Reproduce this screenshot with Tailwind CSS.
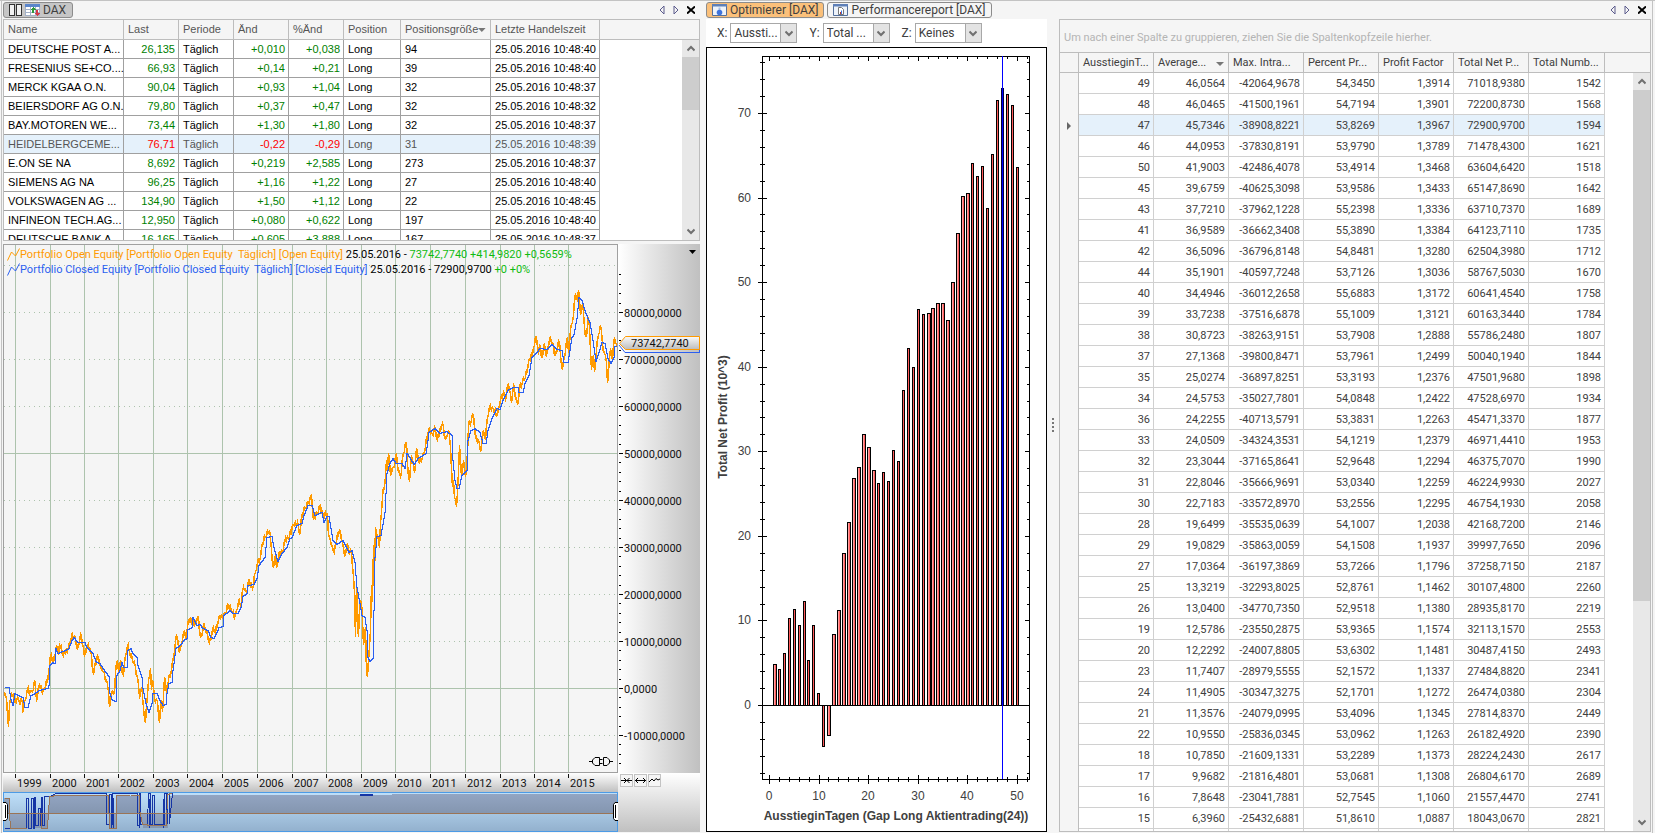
<!DOCTYPE html>
<html lang="de">
  <head>
    <meta charset="UTF-8" />
    <meta name="viewport" content="width=device-width, initial-scale=1" />
    <title>Optimierer [DAX]</title>
    <script src="https://cdn.jsdelivr.net/npm/@tailwindcss/browser@4"></script>
  </head>
  <body
    class="h-screen overflow-hidden bg-[#f5f5f5] font-[Roboto,'Liberation_Sans',sans-serif] text-[11px] text-[#404040]"
  >
    <main
      class="grid h-full grid-cols-[700fr_6px_341fr_12px_592fr_4px] border-t border-[#c3c3c3]"
    >
      <!-- Watchlist and equity chart -->
      <section
        class="ml-px flex min-h-0 min-w-0 flex-col border-l border-[#c3c3c3] pb-px pl-px"
      >
        <div class="flex h-[18px] shrink-0 items-center justify-between">
          <button
            class="flex h-4 items-center gap-[3px] rounded-[3px] border border-[#8c8c8c] bg-[#c6c6c6] pr-1.5 pl-[5px] text-xs"
          >
            <svg width="13" height="12" viewBox="0 0 13 12" fill="#f2f2f2" stroke="#333" shape-rendering="crispEdges">
              <path d="M.5.5h5v11h-5zM7.5.5h5v11h-5z" />
            </svg>
            <svg width="15" height="12" viewBox="0 0 15 12" shape-rendering="crispEdges">
              <path d="M0 0h15v12H0z" fill="#fff" />
              <path d="M.5.5h14v11H.5zM0 5.500h15M0 8.500h15M5.500 3v9M10.500 3v9" fill="none" stroke="#a3b1c8" />
              <path d="M0 0h15v3H0z" fill="#5b86cc" />
              <path d="M8 3l3 3H9v3H7V6H5z" fill="#2f9a3a" />
              <path d="M12 12l-3-3h2V6h2v3h2z" fill="#d23a48" />
            </svg>
            DAX
          </button>
          <div class="flex items-center gap-2 pr-[5px]">
            <button aria-label="Zurück">
              <svg width="6" height="10" viewBox="0 0 6 10" fill="none" stroke="#5b5b8c"><path d="M5 1v8L1 5z" /></svg>
            </button>
            <button aria-label="Vor">
              <svg width="6" height="10" viewBox="0 0 6 10" fill="none" stroke="#5b5b8c"><path d="M1 1v8l4-4z" /></svg>
            </button>
            <button aria-label="Schließen">
              <svg width="8" height="8" viewBox="0 0 8 8" stroke="#000" stroke-width="2"><path d="M0 .5l8 7M8 .5l-8 7" /></svg>
            </button>
          </div>
        </div>

        <div
          class="relative h-[222px] shrink-0 overflow-hidden border border-[#bdbdbd] bg-white font-['Liberation_Sans',sans-serif]"
        >
          <table class="w-full table-fixed border-separate border-spacing-0">
            <thead>
              <tr class="h-5 bg-[#f5f5f5] text-left text-[#555]">
                <th class="w-[120px] border-r border-b border-[#bdbdbd] px-1 font-normal">Name</th>
                <th class="w-[55px] border-r border-b border-[#bdbdbd] px-1 font-normal">Last</th>
                <th class="w-[55px] border-r border-b border-[#bdbdbd] px-1 font-normal">Periode</th>
                <th class="w-[55px] border-r border-b border-[#bdbdbd] px-1 font-normal">Änd</th>
                <th class="w-[55px] border-r border-b border-[#bdbdbd] px-1 font-normal">%Änd</th>
                <th class="w-[57px] border-r border-b border-[#bdbdbd] px-1 font-normal">Position</th>
                <th class="w-[90px] border-r border-b border-[#bdbdbd] px-1 font-normal">
                  <div class="flex items-center justify-between">
                    Positionsgröße
                    <svg width="8" height="4" viewBox="0 0 8 4" fill="#777"><path d="M0 0h8L4 4z" /></svg>
                  </div>
                </th>
                <th class="w-[109px] border-r border-b border-[#bdbdbd] px-1 font-normal">Letzte Handelszeit</th>
                <th class="border-b border-[#bdbdbd]"></th>
              </tr>
            </thead>
            <tbody id="watchlist" class="text-black"></tbody>
          </table>
          <div class="absolute top-5 right-0 bottom-0 flex w-[17px] flex-col bg-[#e8e8e8]">
            <button aria-label="Nach oben" class="grid h-[17px] place-items-center">
              <svg width="8" height="7" viewBox="0 0 8 7" fill="none" stroke="#707070" stroke-width="2"><path d="M.5 5.500L4 2l3.500 3.500" /></svg>
            </button>
            <div class="h-[53px] bg-[#cdcdcd]"></div>
            <button aria-label="Nach unten" class="mt-auto grid h-[17px] place-items-center">
              <svg width="8" height="7" viewBox="0 0 8 7" fill="none" stroke="#707070" stroke-width="2"><path d="M.5 1.500L4 5l3.500-3.500" /></svg>
            </button>
          </div>
        </div>

        <div class="mt-[3px] grid min-h-0 flex-1 grid-cols-[615fr_82fr] grid-rows-[minmax(0,1fr)_19px_40px]">
          <div class="relative border border-[#a0a0a0]">
            <svg class="block h-full w-full" viewBox="4 245 613 527" preserveAspectRatio="none" fill="none" shape-rendering="crispEdges">
              <g id="equityGrid"></g>
              <polyline id="openEquity" stroke="#ff9a00" stroke-width="1.500" />
              <polyline id="closedEquity" stroke="#2b5ff0" />
            </svg>
            <div class="absolute top-0.5 left-[3px] leading-[15px] text-black">
              <p class="flex items-center whitespace-nowrap">
                <svg width="13" height="13" viewBox="0 0 13 13" fill="none" stroke="#ff9a00"><path d="M.5 12.500L4.500 4l4 4 4-7.500" /></svg>
                <span class="whitespace-pre text-[#ff9a00]">Portfolio Open Equity [Portfolio Open Equity  Täglich] [Open Equity] </span>
                <span class="whitespace-pre">25.05.2016 - </span>
                <span class="text-[#0fbb0f]">73742,7740 +414,9820 +0,5659%</span>
              </p>
              <p class="flex items-center whitespace-nowrap">
                <svg width="13" height="13" viewBox="0 0 13 13" fill="none" stroke="#2b5ff0"><path d="M.5 12.500L4.500 4l4 4 4-7.500" /></svg>
                <span class="whitespace-pre text-[#2b5ff0]">Portfolio Closed Equity [Portfolio Closed Equity  Täglich] [Closed Equity] </span>
                <span class="whitespace-pre">25.05.2016 - 72900,9700 </span>
                <span class="text-[#0fbb0f]">+0 +0%</span>
              </p>
            </div>
            <svg class="absolute right-1 bottom-1.5" width="24" height="10" viewBox="0 0 24 10" fill="none" stroke="#000">
              <path d="M0 5.500h3.500M10.500 1.500H6L3.500 4v3L6 9.500h4.500zM10.500 3.500h3M10.500 7.500h3M14.500 1.500H18L20.500 4v3L18 9.500h-3.500zM20.500 5.500H24" />
            </svg>
          </div>

          <div class="relative bg-linear-to-r from-white to-[#c0c0c0]">
            <svg class="block h-full w-full" viewBox="618 244 82 529" preserveAspectRatio="none" shape-rendering="crispEdges">
              <defs>
                <linearGradient id="tag" x2="0" y2="1">
                  <stop stop-color="#fafafa" />
                  <stop offset="1" stop-color="#bcbcbc" />
                </linearGradient>
              </defs>
              <g id="priceAxis" fill="#111" stroke="#000"></g>
              <path d="M619 345l6 7.500h75M699.500 338v14" fill="none" stroke="#2b5ff0" shape-rendering="auto" />
              <path d="M619.500 343.500l6-7h74v13h-74z" fill="url(#tag)" stroke="#ff9a00" shape-rendering="auto" />
              <text x="631" y="347" fill="#111">73742,7740</text>
            </svg>
            <button aria-label="Achse" class="absolute top-1.5 right-1">
              <svg width="7" height="4" viewBox="0 0 7 4"><path d="M0 0h7L3.500 4z" /></svg>
            </button>
          </div>

          <svg class="block h-full w-full bg-linear-to-b from-white to-[#c0c0c0]" viewBox="3 773 615 19" preserveAspectRatio="none">
            <g id="timeAxis" fill="#111"></g>
          </svg>

          <div class="row-span-2 bg-linear-to-b from-white to-[#c0c0c0] pt-px pl-0.5">
            <div class="flex gap-px">
              <button aria-label="Stauchen" class="grid h-[13px] w-[13px] place-items-center border border-[#c3c3c3] bg-[#f5f5f5]">
                <svg width="11" height="7" viewBox="0 0 11 7" fill="none" stroke="#000"><path d="M0 3.500h11M3 1l2.500 2.500L3 6M8.500 1L6 3.500 8.500 6" /></svg>
              </button>
              <button aria-label="Strecken" class="grid h-[13px] w-[13px] place-items-center border border-[#c3c3c3] bg-[#f5f5f5]">
                <svg width="11" height="7" viewBox="0 0 11 7" fill="none" stroke="#000"><path d="M0 3.500h11M3 1L.5 3.500 3 6M8 1l2.500 2.500L8 6" /></svg>
              </button>
              <button aria-label="Linie" class="grid h-[13px] w-[13px] place-items-center border border-[#c3c3c3] bg-[#f5f5f5]">
                <svg width="11" height="7" viewBox="0 0 11 7" fill="none" stroke="#000"><path d="M0 5l3-3 2 2 2-2.500L9 3l2-1" /></svg>
              </button>
            </div>
          </div>

          <!-- Range navigator -->
          <svg class="block h-full w-full" viewBox="3 792 615 40" preserveAspectRatio="none" shape-rendering="crispEdges">
            <defs>
              <linearGradient id="sky" x2="0" y2="1">
                <stop stop-color="#bfe0fa" />
                <stop offset="1" stop-color="#93b1ce" />
              </linearGradient>
              <linearGradient id="hill" x2="0" y2="1">
                <stop stop-color="#93a5c2" />
                <stop offset="1" stop-color="#8496b0" />
              </linearGradient>
            </defs>
            <path d="M3 792h615v39H3z" fill="url(#sky)" />
            <g fill="url(#hill)">
              <path d="M4 798h5v15H4zM49 797l8-2h50l2 1v17H49zM117 796h23v17h-23zM169 797l4-2 445-1v19H169z" />
              <path d="M10 813h38v15H11zM109 813h8v16h-8zM141 813h27v15h-25z" />
            </g>
            <g fill="none" stroke="#1535a5">
              <path d="M4.500 828.500h22v-30h2v30h3v-30h2v30h1v-31h1v28h3v-17h2v17h1v-28h1v28h2v-29h5l7-3h50v31h3v-30h2v30h1v-31h25v32h2v-32h1v31h7l1-31h2v31h2v-29h2v29h10v-31h2v30h1v-31h2v31l3-31 6-2h85" />
              <path d="M111.500 798v31M113.500 798v31M139.500 813v15M149.500 799v29M163.500 799v29" />
              <path d="M360 794.500h13" stroke-width="2" />
            </g>
            <path d="M4.500 798.500h5v15l1 14.500h16M38.500 813h3v15h6l2-31 8-2h50l1 1v17h1v15h7v-32l14-1h9v15l3 14h5v1h19l1-30 4-2 83-1H618M3 813.500h615" fill="none" stroke="#9a7456" />
            <path d="M3.500 792.500h614v38.500H3.500z" fill="none" stroke="#4c9be6" />
            <g fill="#fff" stroke="#000" shape-rendering="auto">
              <path d="M3 802.500h3l1.500 2v14l-1.500 2H3M5.500 805v13" />
              <path d="M618 802.500h-3l-1.500 2v14l1.500 2h3M615.500 805v13" />
            </g>
          </svg>
        </div>
      </section>

      <!-- Optimizer chart -->
      <section class="col-start-3 flex min-h-0 min-w-0 flex-col pb-px">
        <div class="flex h-[18px] shrink-0 items-center gap-[3px] text-xs">
          <button class="flex h-4 items-center gap-[3px] rounded-[3px] border border-[#8c8c8c] bg-[#fbc07a] px-[5px]">
            <svg width="15" height="12" viewBox="0 0 15 12">
              <path d="M.5.5h14v11H.5z" fill="#eef3fa" stroke="#54709c" />
              <path d="M0 0h15v2.500H0z" fill="#5f80b8" />
              <path d="M6.500 3.500h2V6h-2z" fill="#a9bfe6" />
              <circle cx="7.500" cy="8.500" r="2.800" fill="#3f74dd" />
            </svg>
            Optimierer [DAX]
          </button>
          <button class="flex h-4 items-center gap-[3px] rounded-[3px] border border-[#8c8c8c] bg-[#f5f5f5] px-[5px]">
            <svg width="15" height="12" viewBox="0 0 15 12">
              <path d="M.5.5h14v11H.5z" fill="#eef3fa" stroke="#54709c" />
              <path d="M0 0h15v2.500H0z" fill="#5f80b8" />
              <path d="M5.500 3.500h3l2 2v5h-5z" fill="#fff" stroke="#777" />
              <path d="M7 8h1v2H7z" fill="#c0392b" />
              <path d="M8 6.500h1V10H8z" fill="#3f74dd" />
            </svg>
            Performancereport [DAX]
          </button>
        </div>

        <div class="flex h-7 shrink-0 items-center gap-3 bg-white pl-[11px] text-xs">
          <label class="relative flex items-center gap-[3px]">
            X:
            <select class="h-5 w-[67px] appearance-none border border-[#a8a8a8] bg-white pl-[3px]">
              <option>Aussti...</option>
            </select>
            <span class="pointer-events-none absolute right-px grid h-[18px] w-4 place-items-center border-l border-[#a8a8a8] bg-[#e3e3e3]">
              <svg width="8" height="7" viewBox="0 0 8 7" fill="none" stroke="#707070" stroke-width="2"><path d="M.5 1.500L4 5l3.500-3.500" /></svg>
            </span>
          </label>
          <label class="relative flex items-center gap-[3px]">
            Y:
            <select class="h-5 w-[67px] appearance-none border border-[#a8a8a8] bg-white pl-[3px]">
              <option>Total ...</option>
            </select>
            <span class="pointer-events-none absolute right-px grid h-[18px] w-4 place-items-center border-l border-[#a8a8a8] bg-[#e3e3e3]">
              <svg width="8" height="7" viewBox="0 0 8 7" fill="none" stroke="#707070" stroke-width="2"><path d="M.5 1.500L4 5l3.500-3.500" /></svg>
            </span>
          </label>
          <label class="relative flex items-center gap-[3px]">
            Z:
            <select class="h-5 w-[67px] appearance-none border border-[#a8a8a8] bg-white pl-[3px]">
              <option>Keines</option>
            </select>
            <span class="pointer-events-none absolute right-px grid h-[18px] w-4 place-items-center border-l border-[#a8a8a8] bg-[#e3e3e3]">
              <svg width="8" height="7" viewBox="0 0 8 7" fill="none" stroke="#707070" stroke-width="2"><path d="M.5 1.500L4 5l3.500-3.500" /></svg>
            </span>
          </label>
        </div>

        <div class="min-h-0 flex-1 border border-black bg-white">
          <svg class="block h-full w-full font-['Liberation_Sans',sans-serif] text-[12px]" viewBox="707 48 339 783" preserveAspectRatio="none" fill="#404040">
            <g id="bars" shape-rendering="crispEdges"></g>
            <g id="profitAxes" shape-rendering="crispEdges"></g>
            <g id="profitLabels"></g>
            <text x="896" y="820" text-anchor="middle" font-weight="bold">AusstieginTagen (Gap Long Aktientrading(24))</text>
            <text transform="translate(727 417) rotate(-90)" text-anchor="middle" font-weight="bold">Total Net Profit (10^3)</text>
          </svg>
        </div>
      </section>

      <div class="col-start-4 grid place-items-center pt-4">
        <svg width="2" height="14" viewBox="0 0 2 14" fill="#777"><path d="M0 0h2v2H0zM0 4h2v2H0zM0 8h2v2H0zM0 12h2v2H0z" /></svg>
      </div>

      <!-- Optimizer results -->
      <section class="col-start-5 flex min-h-0 min-w-0 flex-col pb-px">
        <div class="flex h-[18px] shrink-0 items-center justify-end gap-2 pr-[5px]">
          <button aria-label="Zurück">
            <svg width="6" height="10" viewBox="0 0 6 10" fill="none" stroke="#5b5b8c"><path d="M5 1v8L1 5z" /></svg>
          </button>
          <button aria-label="Vor">
            <svg width="6" height="10" viewBox="0 0 6 10" fill="none" stroke="#5b5b8c"><path d="M1 1v8l4-4z" /></svg>
          </button>
          <button aria-label="Schließen">
            <svg width="8" height="8" viewBox="0 0 8 8" stroke="#000" stroke-width="2"><path d="M0 .5l8 7M8 .5l-8 7" /></svg>
          </button>
        </div>
        <div class="relative min-h-0 flex-1 overflow-hidden border border-[#bdbdbd] bg-white">
          <p class="flex h-[33px] items-center border-b border-[#bdbdbd] bg-[#f5f5f5] pt-1 pl-1 text-[#b4b4b4]">
            Um nach einer Spalte zu gruppieren, ziehen Sie die Spaltenkopfzeile hierher.
          </p>
          <table class="w-full table-fixed border-separate border-spacing-0">
            <thead>
              <tr class="h-5 bg-[#f5f5f5] text-left">
                <th class="w-[19px] border-r border-b border-[#bdbdbd]"></th>
                <th class="w-[75px] border-r border-b border-[#bdbdbd] pt-0.5 pl-1 font-normal">AusstieginT...</th>
                <th class="w-[75px] border-r border-b border-[#bdbdbd] px-1 pt-0.5 font-normal">
                  <div class="flex items-center justify-between">
                    Average...
                    <svg width="8" height="4" viewBox="0 0 8 4" fill="#777"><path d="M0 0h8L4 4z" /></svg>
                  </div>
                </th>
                <th class="w-[75px] border-r border-b border-[#bdbdbd] pt-0.5 pl-1 font-normal">Max. Intra...</th>
                <th class="w-[75px] border-r border-b border-[#bdbdbd] pt-0.5 pl-1 font-normal">Percent Pr...</th>
                <th class="w-[75px] border-r border-b border-[#bdbdbd] pt-0.5 pl-1 font-normal">Profit Factor</th>
                <th class="w-[75px] border-r border-b border-[#bdbdbd] pt-0.5 pl-1 font-normal">Total Net P...</th>
                <th class="w-[76px] border-r border-b border-[#bdbdbd] pt-0.5 pl-1 font-normal">Total Numb...</th>
                <th class="border-b border-[#bdbdbd]"></th>
              </tr>
            </thead>
            <tbody id="results"></tbody>
          </table>
          <div class="absolute top-[53px] right-0 bottom-0 flex w-[17px] flex-col bg-[#e8e8e8]">
            <button aria-label="Nach oben" class="grid h-[17px] place-items-center">
              <svg width="8" height="7" viewBox="0 0 8 7" fill="none" stroke="#707070" stroke-width="2"><path d="M.5 5.500L4 2l3.500 3.500" /></svg>
            </button>
            <div class="h-[511px] bg-[#cdcdcd]"></div>
            <button aria-label="Nach unten" class="mt-auto grid h-[17px] place-items-center">
              <svg width="8" height="7" viewBox="0 0 8 7" fill="none" stroke="#707070" stroke-width="2"><path d="M.5 1.500L4 5l3.500-3.500" /></svg>
            </button>
          </div>
        </div>
      </section>
      <div class="col-start-6 ml-px border-l border-[#c3c3c3]"></div>
    </main>

    <script>
      const byId = (id) => document.getElementById(id);

      // Watchlist rows
      const stocks = [
        ["DEUTSCHE POST A...", "26,135", "+0,010", "+0,038", "94", "40"],
        ["FRESENIUS SE+CO....", "66,93", "+0,14", "+0,21", "39", "40"],
        ["MERCK KGAA O.N.", "90,04", "+0,93", "+1,04", "32", "37"],
        ["BEIERSDORF AG O.N.", "79,80", "+0,37", "+0,47", "32", "32"],
        ["BAY.MOTOREN WE...", "73,44", "+1,30", "+1,80", "32", "37"],
        ["HEIDELBERGCEME...", "76,71", "-0,22", "-0,29", "31", "39"],
        ["E.ON SE NA", "8,692", "+0,219", "+2,585", "273", "37"],
        ["SIEMENS AG NA", "96,25", "+1,16", "+1,22", "27", "40"],
        ["VOLKSWAGEN AG ...", "134,90", "+1,50", "+1,12", "22", "45"],
        ["INFINEON TECH.AG...", "12,950", "+0,080", "+0,622", "197", "40"],
        ["DEUTSCHE BANK A...", "16,165", "+0,605", "+3,888", "167", "37"],
      ];
      const cell = "border-r border-b border-[#a0a0a0] whitespace-nowrap";
      byId("watchlist").innerHTML = stocks
        .map(([name, last, diff, pct, size, sec]) => {
          const down = diff[0] === "-";
          const tone = down ? "text-[#ff0000]" : "text-[#008000]";
          return `<tr class="h-[19px] ${down ? "bg-[#e5f1fb] text-[#555]" : ""}">
            <td class="${cell} pl-1">${name}</td>
            <td class="${cell} pr-[3px] text-right ${tone}">${last}</td>
            <td class="${cell} pl-1">Täglich</td>
            <td class="${cell} pr-[3px] text-right ${tone}">${diff}</td>
            <td class="${cell} pr-[3px] text-right ${tone}">${pct}</td>
            <td class="${cell} pl-1">Long</td>
            <td class="${cell} pl-1">${size}</td>
            <td class="${cell} pr-[3px] text-right">25.05.2016 10:48:${sec}</td>
            <td class="bg-white"></td>
          </tr>`;
        })
        .join("");

      // Optimizer results
      const results = `49 46,0564 -42064,9678 54,3450 1,3914 71018,9380 1542
48 46,0465 -41500,1961 54,7194 1,3901 72200,8730 1568
47 45,7346 -38908,8221 53,8269 1,3967 72900,9700 1594
46 44,0953 -37830,8191 53,9790 1,3789 71478,4300 1621
50 41,9003 -42486,4078 53,4914 1,3468 63604,6420 1518
45 39,6759 -40625,3098 53,9586 1,3433 65147,8690 1642
43 37,7210 -37962,1228 55,2398 1,3336 63710,7370 1689
41 36,9589 -36662,3408 55,3890 1,3384 64123,7110 1735
42 36,5096 -36796,8148 54,8481 1,3280 62504,3980 1712
44 35,1901 -40597,7248 53,7126 1,3036 58767,5030 1670
40 34,4946 -36012,2658 55,6883 1,3172 60641,4540 1758
39 33,7238 -37516,6878 55,1009 1,3121 60163,3440 1784
38 30,8723 -38263,9151 53,7908 1,2888 55786,2480 1807
37 27,1368 -39800,8471 53,7961 1,2499 50040,1940 1844
35 25,0274 -36897,8251 53,3193 1,2376 47501,9680 1898
34 24,5753 -35027,7801 54,0848 1,2422 47528,6970 1934
36 24,2255 -40713,5791 53,3831 1,2263 45471,3370 1877
33 24,0509 -34324,3531 54,1219 1,2379 46971,4410 1953
32 23,3044 -37165,8641 52,9648 1,2294 46375,7070 1990
31 22,8046 -35666,9691 53,0340 1,2259 46224,9930 2027
30 22,7183 -33572,8970 53,2556 1,2295 46754,1930 2058
28 19,6499 -35535,0639 54,1007 1,2038 42168,7200 2146
29 19,0829 -35863,0059 54,1508 1,1937 39997,7650 2096
27 17,0364 -36197,3869 53,7266 1,1796 37258,7150 2187
25 13,3219 -32293,8025 52,8761 1,1462 30107,4800 2260
26 13,0400 -34770,7350 52,9518 1,1380 28935,8170 2219
19 12,5786 -23550,2875 53,9365 1,1574 32113,1570 2553
20 12,2292 -24007,8805 53,6302 1,1481 30487,4150 2493
23 11,7407 -28979,5555 52,1572 1,1337 27484,8820 2341
24 11,4905 -30347,3275 52,1701 1,1272 26474,0380 2304
21 11,3576 -24079,0995 53,4096 1,1345 27814,8370 2449
22 10,9550 -25836,0345 53,0962 1,1263 26182,4920 2390
18 10,7850 -21609,1331 53,2289 1,1373 28224,2430 2617
17 9,9682 -21816,4801 53,0681 1,1308 26804,6170 2689
16 7,8648 -23041,7881 52,7545 1,1060 21557,4470 2741
15 6,3960 -25432,6881 51,8610 1,0887 18043,0670 2821`
        .split("\n")
        .map((line) => line.split(" "));
      const marker =
        '<svg class="mx-auto" width="4" height="8" viewBox="0 0 4 8" fill="#666"><path d="M0 0l4 4-4 4z" /></svg>';
      byId("results").innerHTML = [...results, Array(7).fill("")]
        .map((row) => {
          const active = row[0] === "47";
          const cells = row
            .map((v) => `<td class="border-r border-b border-[#d0d0d0] pt-0.5 pr-[3px] text-right">${v}</td>`)
            .join("");
          return `<tr class="h-[21px] ${active ? "bg-[#e5f1fb]" : ""}">
            <td class="border-r border-[#bdbdbd] bg-[#f5f5f5] pt-px">${active ? marker : ""}</td>
            ${cells}<td class="bg-white"></td>
          </tr>`;
        })
        .join("");

      // Equity chart
      const years = [15, 50, 84, 118, 153, 187, 222, 257, 292, 326, 361, 395, 430, 465, 500, 534, 568];
      const line = (x1, y1, x2, y2, extra = "") =>
        `<path d="M${x1} ${y1}L${x2} ${y2}" ${extra} />`;

      let grid = "";
      let axis = "";
      for (let k = -1; k <= 9; k++) {
        const y = Math.round(688 - k * 47) + 0.5;
        const dots = k % 5 ? 'stroke-dasharray="1 4"' : "";
        grid += line(4, y, 617, y, `stroke="#adc3ad" ${dots}`);
        if (k < 9) {
          axis += line(619, y, 623, y);
          axis += `<text x="624" y="${y + 4}" stroke="none">${k ? k * 10000 : 0},0000</text>`;
        }
      }
      for (let k = -8; k <= 45; k++) {
        if (k % 5) {
          const y = Math.round(688 - k * 9.4) + 0.5;
          axis += line(619, y, 621, y);
        }
      }
      years.forEach((x) => {
        grid += line(x + 0.5, 245, x + 0.5, 772, 'stroke="#adc3ad"');
      });
      byId("equityGrid").innerHTML = grid;
      byId("priceAxis").innerHTML = axis;
      byId("timeAxis").innerHTML = years
        .map(
          (x, i) =>
            `<path d="M${x} 774h1v4h-1z" /><text x="${x + 2}" y="787">${1999 + i}</text>`
        )
        .join("");

      const closed = [
        4,687,9,687,11,699,13,705,15,693,23,697,25,707,28,707,31,695,35,693,39,690,48,688,49,685,50,665,53,662,55,663,
        56,648,58,653,63,651,69,648,72,640,74,637,78,642,85,642,87,647,93,653,96,661,100,663,106,672,109,676,110,693,
        112,699,116,701,117,675,120,670,122,662,124,667,127,667,128,650,131,648,133,653,137,657,138,665,142,677,
        143,688,146,703,149,712,152,703,153,693,157,693,160,700,163,705,166,704,167,693,169,683,172,682,173,670,
        176,648,180,645,184,640,187,638,188,629,192,627,193,617,197,625,200,624,203,628,208,630,211,637,214,638,
        217,632,219,627,223,626,224,615,230,610,233,613,238,613,241,607,243,596,247,593,248,585,254,584,257,578,
        259,565,265,557,267,537,272,536,274,547,278,561,282,553,287,547,290,538,292,537,297,525,302,523,304,515,
        308,505,312,505,315,515,322,512,324,522,327,516,329,516,331,528,333,540,337,544,343,540,349,552,352,550,
        355,562,357,587,360,603,362,615,365,617,367,630,368,657,370,661,373,658,374,610,375,557,377,536,381,535,
        385,512,387,473,390,463,393,458,396,463,402,463,405,468,407,453,410,457,414,464,418,458,426,453,428,440,
        429,432,435,428,440,433,447,431,452,435,453,460,455,480,457,488,459,488,462,475,467,470,468,440,471,430,
        475,428,480,432,483,443,486,443,488,430,492,418,497,408,500,409,503,400,508,390,513,387,518,387,519,392,
        523,392,525,383,529,375,532,357,537,352,540,348,547,349,552,344,557,349,562,350,564,362,568,362,572,337,
        574,334,577,318,579,297,582,300,586,313,590,322,593,340,596,361,598,355,602,342,605,343,608,358,611,363,
        614,357,615,346,617,346,
      ];
      const open = [
        4,692,6,697,7,715,8,727,9,705,10,698,13,693,14,703,17,697,19,703,22,701,22,712,25,700,27,688,30,692,32,692,
        34,680,36,700,39,685,43,691,47,682,48,673,50,655,53,663,56,645,58,655,59,643,63,656,68,647,71,637,74,636,
        77,650,80,634,83,647,84,657,87,645,91,655,93,675,95,662,98,657,100,667,103,672,106,680,108,692,109,707,
        112,690,114,693,115,673,117,660,118,672,120,661,123,675,125,655,127,645,129,652,132,660,135,667,137,677,
        139,697,141,687,143,708,145,723,147,695,148,680,150,668,151,690,152,680,154,697,157,702,159,723,161,700,
        162,712,164,677,166,693,168,680,171,670,173,657,175,642,177,637,179,653,182,640,184,630,186,637,188,619,
        191,623,192,617,194,627,198,617,200,638,204,625,206,633,209,643,213,627,215,633,218,620,222,616,225,613,
        228,605,232,612,235,616,238,602,240,605,243,587,246,593,248,580,252,589,255,572,257,563,260,557,262,543,
        265,537,269,530,271,550,273,568,275,555,276,568,278,557,282,552,285,538,289,537,293,525,297,522,299,535,
        302,513,305,508,308,502,311,495,313,520,317,513,320,505,323,517,327,513,328,537,330,541,333,552,339,530,
        343,548,345,555,347,543,349,555,351,552,353,577,354,593,355,637,356,582,357,623,358,637,359,607,361,602,
        362,620,363,645,365,627,366,673,367,677,369,647,370,630,371,585,372,602,373,545,374,573,375,527,377,535,
        379,548,380,523,382,497,384,487,386,460,387,470,388,453,390,475,393,467,396,453,398,473,400,477,403,453,
        406,442,407,463,409,482,411,455,414,473,416,448,418,462,422,457,425,447,428,430,432,435,434,427,437,440,
        442,423,445,440,448,430,450,447,452,487,453,480,454,498,456,507,458,473,459,445,461,477,463,460,465,477,
        467,453,468,427,471,420,473,415,475,437,478,440,480,452,483,430,485,440,487,417,490,405,493,410,497,415,
        500,400,503,392,505,400,508,383,511,403,513,385,517,405,519,390,522,382,525,377,528,362,532,355,533,347,
        536,337,538,355,539,345,542,357,544,343,546,357,549,339,552,343,555,355,559,341,560,355,562,370,564,357,
        567,337,568,353,570,330,573,315,575,293,577,300,578,290,580,315,582,303,584,327,586,337,588,317,589,327,
        591,370,593,355,594,372,596,350,598,335,600,325,602,343,604,353,606,363,607,383,610,348,612,360,614,337,
        616,345,617,347,
      ];
      // Closed equity only changes when a trade ends, so it is drawn in steps
      let steps = "";
      for (let i = 0; i < closed.length - 2; i += 2) {
        const [x1, y1, x2, y2] = closed.slice(i, i + 4);
        const n = x2 - x1;
        for (let j = 0; j < n; j++) {
          const from = Math.round(y1 + ((y2 - y1) * j) / n) + 0.5;
          const to = Math.round(y1 + ((y2 - y1) * (j + 1)) / n) + 0.5;
          steps += `${x1 + j + 0.5},${from} ${x1 + j + 0.5},${to} `;
        }
      }
      byId("closedEquity").setAttribute("points", steps);

      // Daily swings around the open equity
      const swing = [3, -4, 2, -3, 5, -2, 3, -5];
      let daily = "";
      for (let i = 0, s = 0; i < open.length - 2; i += 2) {
        const [x1, y1, x2, y2] = open.slice(i, i + 4);
        daily += `${x1 + 0.5},${y1} `;
        for (let x = x1 + 1; x < x2; x++, s++) {
          const y = y1 + ((y2 - y1) * (x - x1)) / (x2 - x1);
          daily += `${x + 0.5},${y + swing[s % 8]} ${x + 0.5},${y - swing[(s + 3) % 8] / 2} `;
        }
      }
      byId("openEquity").setAttribute("points", daily + "617,347");

      // Net profit per exit day, in thousands
      const profit = [
        4.8, 4.2, 6.2, 10.3, 11.3, 9.5, 12.3, 5.3, 9.5, 1.4, -4.8, -3.6, 8.4, 11.2, 18, 21.6, 26.8, 28.2, 32.1, 30.5,
        27.8, 26.2, 27.5, 26.5, 30.1, 28.9, 37.3, 42.2, 40, 46.8, 46.2, 46.4, 47, 47.5, 47.5, 45.5, 50, 55.8, 60.2,
        60.6, 64.1, 62.5, 63.7, 58.8, 65.1, 71.5, 72.9, 72.2, 71, 63.6,
      ];
      const px = (n) => 769.4 + n * 4.96;
      const py = (v) => Math.round(705 - v * 8.457);
      byId("bars").innerHTML = profit
        .map((v, i) => {
          const n = i + 1;
          const wide = n === 1 || (n > 11 && n < 22) || (n > 31 && n < 41);
          const x = Math.round(px(n) - 1.6);
          const w = wide ? 4 : 3;
          const top = Math.min(py(v), 705);
          const h = Math.abs(py(v) - 705);
          if (n === 47) {
            return `<rect x="${x}" y="${top}" width="3" height="${h}" fill="#00003c" />`;
          }
          return `<rect x="${x}" y="${top}" width="${w}" height="${h + 1}" fill="#000" />
            <rect x="${x + 1}" y="${top + 1}" width="${w - 2}" height="${h - 1}" fill="#ff5a5a" />
            ${wide ? `<rect x="${x + 1}" y="${top + 1}" width="1" height="${h - 1}" fill="#ffa0a0" />` : ""}`;
        })
        .join("");

      let ticks = `<path d="M762.500 56.500h267v723h-267zM762 705.500h267" fill="none" stroke="#000" />`;
      let labels = "";
      const tick = (x, y, w, h, fill = "#000") =>
        (ticks += `<rect x="${x}" y="${y}" width="${w}" height="${h}" fill="${fill}" />`);
      for (let v = -8; v <= 76; v += 2) {
        const major = v % 10 === 0;
        tick(major ? 758 : 760, py(v), major ? 9 : 5, 1);
        tick(major ? 1025 : 1027, py(v), major ? 4 : 2, 1);
        if (major) labels += `<text x="751" y="${py(v) + 4}" text-anchor="end">${v}</text>`;
      }
      for (let n = 0; n <= 52; n += 2) {
        const major = n % 10 === 0;
        const x = Math.floor(px(n));
        tick(x, 56, 1, major ? 5 : 3);
        tick(x, major ? 775 : 777, 1, major ? 9 : 5);
        if (major) labels += `<text x="${x}" y="800" text-anchor="middle">${n}</text>`;
      }
      // Selected run
      tick(1002, 56, 1, 723, "#0000ff");
      byId("profitAxes").innerHTML = ticks;
      byId("profitLabels").innerHTML = labels;
    </script>
  </body>
</html>
